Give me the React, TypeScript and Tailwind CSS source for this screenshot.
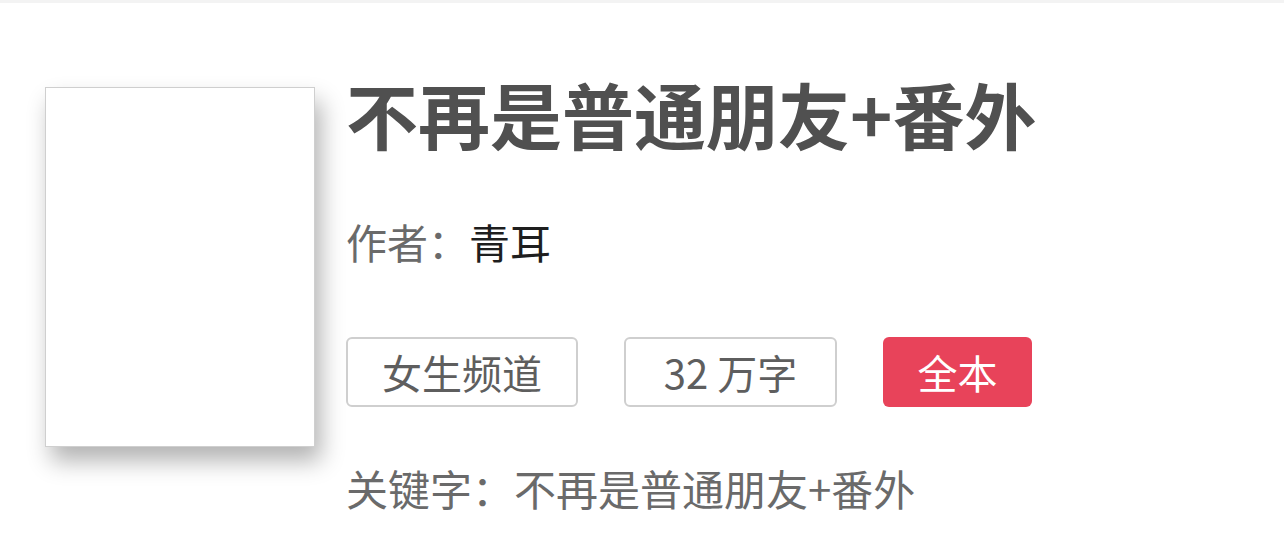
import React from "react";

const tagBase =
  "h-[70px] flex items-center justify-center rounded-[6px] text-[40px] leading-none";

export default function App() {
  return (
    <div
      className="w-[1284px] h-[547px] bg-white overflow-hidden"
      style={{ fontFamily: '"Noto Sans CJK SC", "Noto Sans", sans-serif' }}
    >
      <div className="h-[3px] bg-[#f3f3f3]" />
      <div className="flex items-start pl-[45px] pt-[74px]">
        {/* book cover placeholder */}
        <div className="mt-[10px] w-[270px] h-[360px] shrink-0 bg-white border border-[#cfcfcf] shadow-[6px_14px_22px_rgba(0,0,0,0.3)]" />

        <div className="ml-[31px] flex flex-col">
          <h1 className="text-[72px] leading-[72px] font-bold text-[#505050]">
            不再是普通朋友+番外
          </h1>

          <div className="mt-[72px] text-[41px] leading-[41px] text-[#6a6a6a]">
            作者：<span className="text-[#1e1e1e]">青耳</span>
          </div>

          <div className="mt-[75px] flex gap-[46px]">
            <div className={`${tagBase} w-[232px] border-2 border-[#cfcfcf] text-[#5e5e5e]`}>
              女生频道
            </div>
            <div className={`${tagBase} w-[213px] border-2 border-[#cfcfcf] text-[#5e5e5e]`}>
              32 万字
            </div>
            <div className={`${tagBase} w-[149px] bg-[#e8435a] text-white`}>
              全本
            </div>
          </div>

          <div className="mt-[60px] text-[42px] leading-[42px] text-[#6a6a6a]">
            关键字：不再是普通朋友+番外
          </div>
        </div>
      </div>
    </div>
  );
}
